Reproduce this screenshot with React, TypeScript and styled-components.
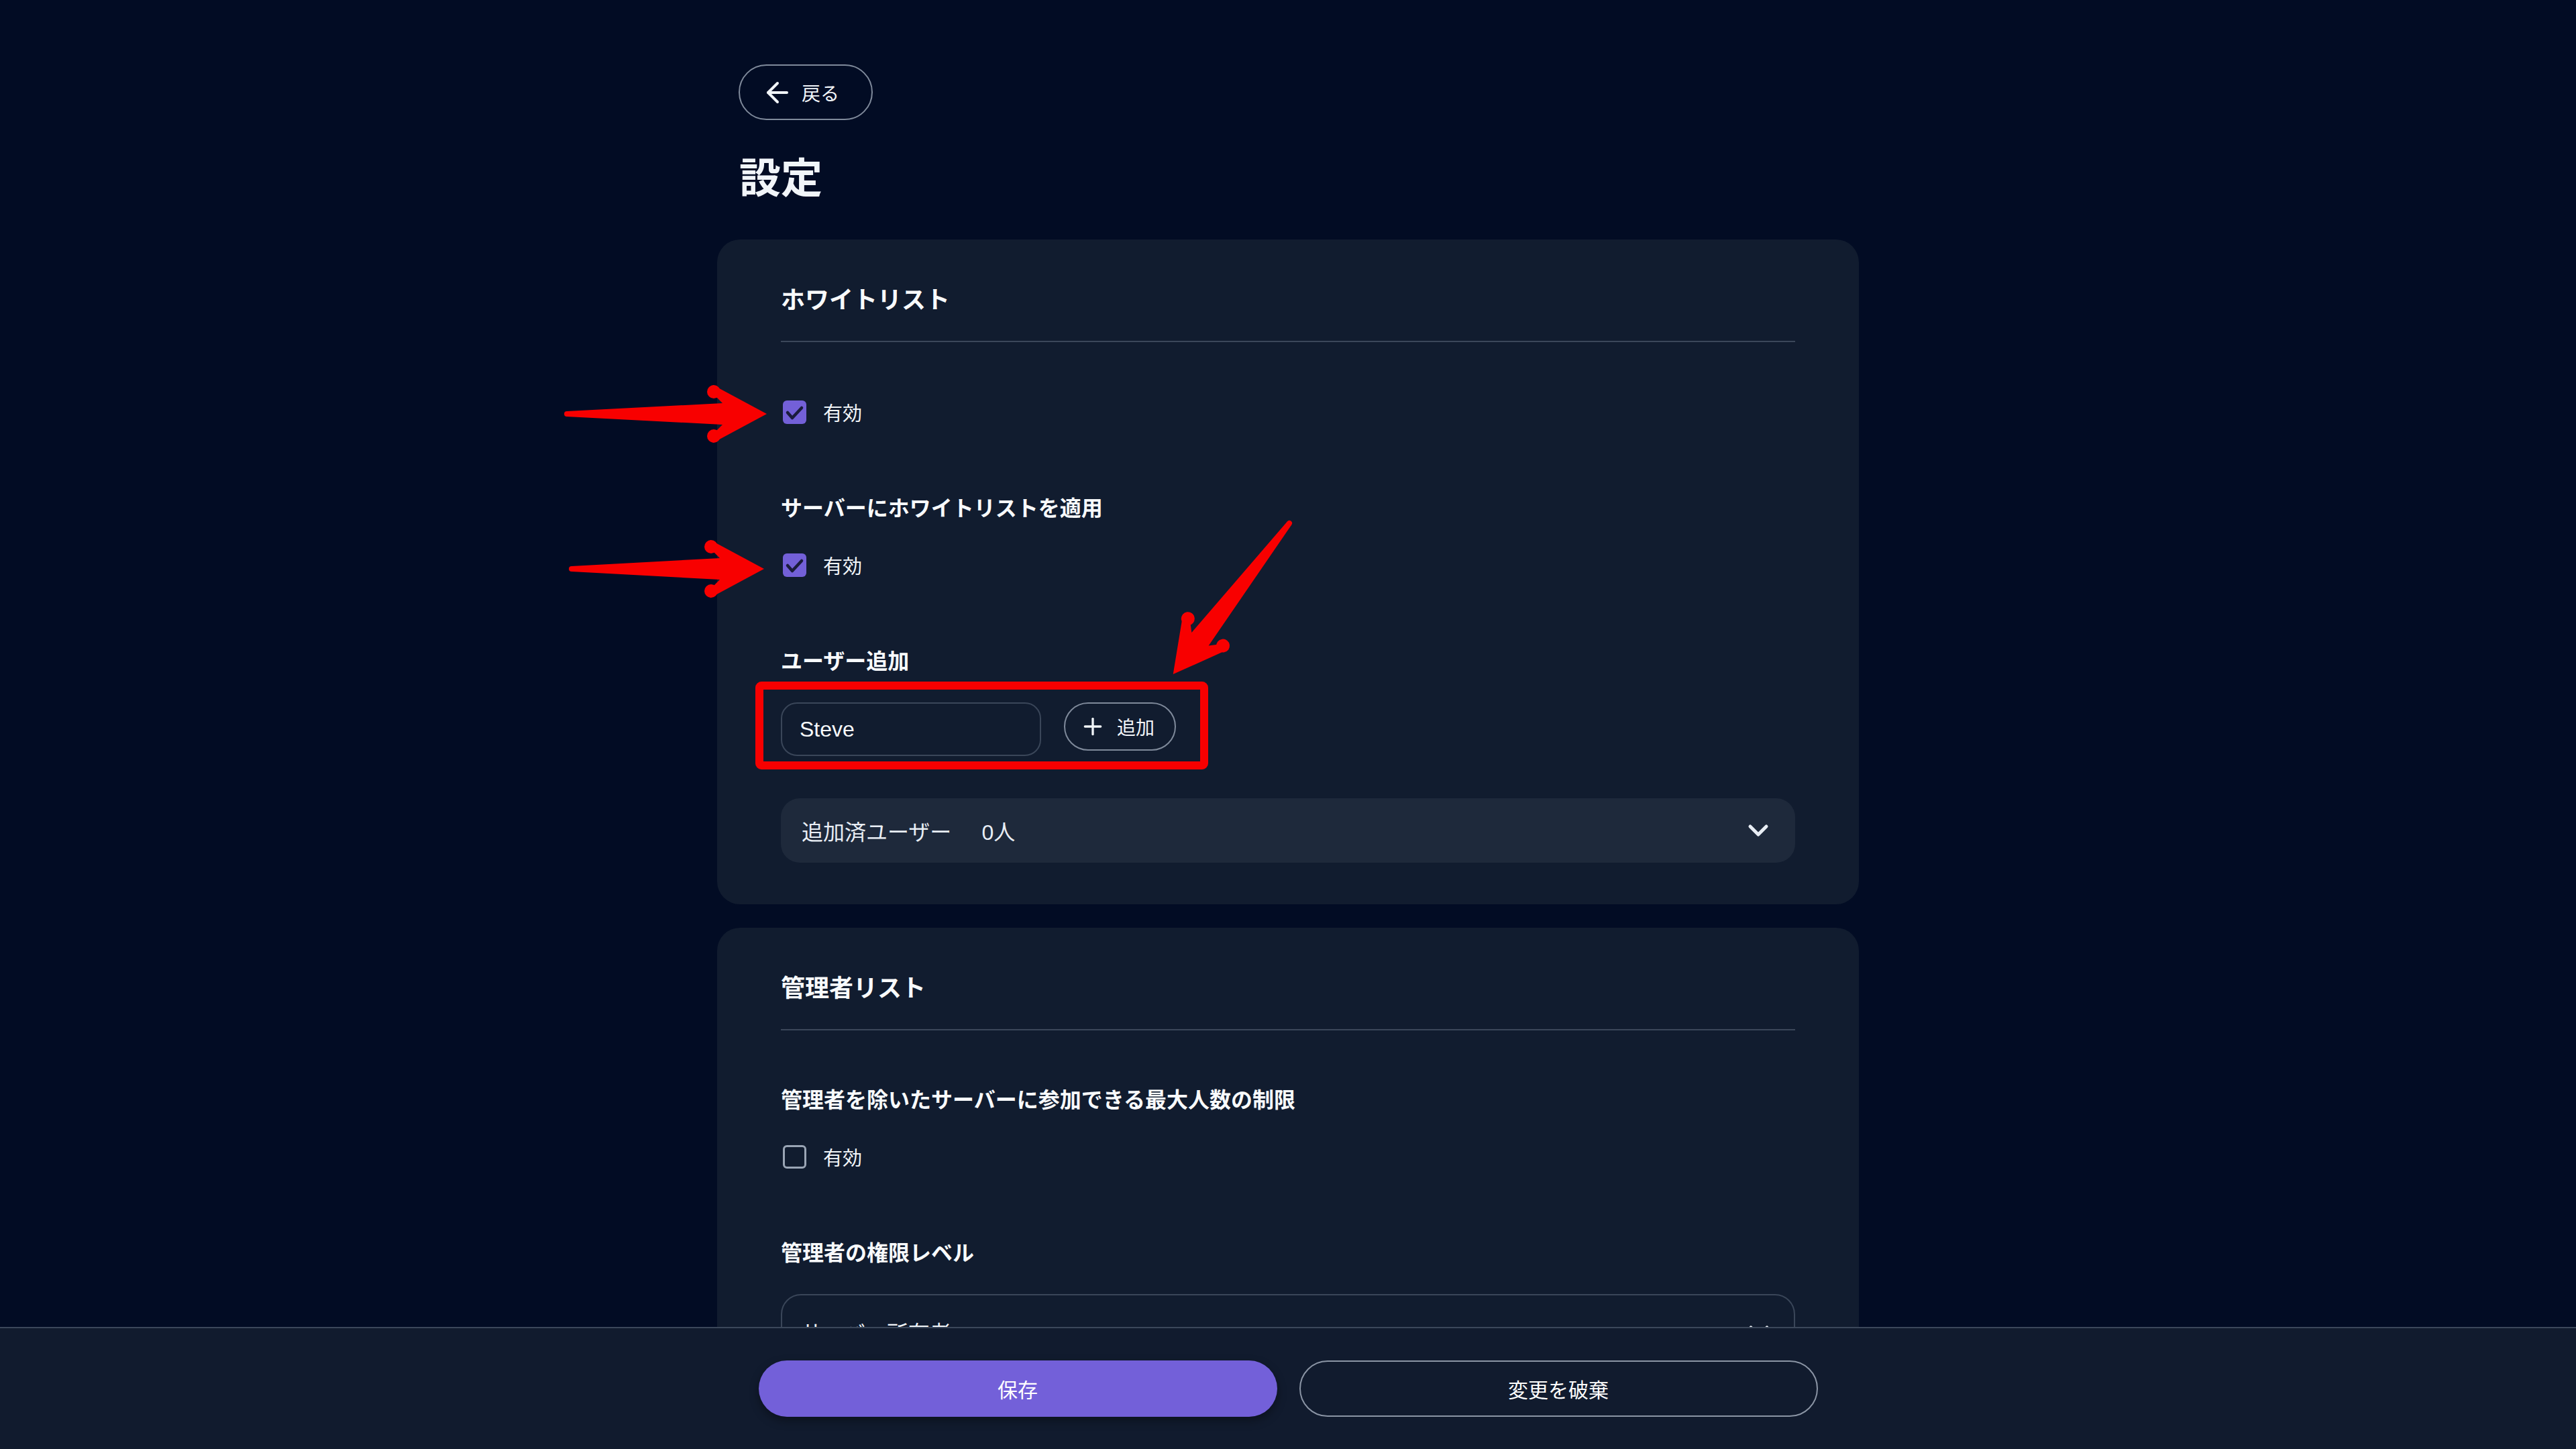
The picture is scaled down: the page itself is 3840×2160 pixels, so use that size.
import styled, { createGlobalStyle } from 'styled-components';
import { ArrowLeft, Plus, ChevronDown } from 'lucide-react';

const sans = `"Liberation Sans", "Noto Sans CJK JP", sans-serif`;

const GlobalStyle = createGlobalStyle`
  html, body {
    margin: 0;
    padding: 0;
    overflow: hidden;
  }

  body {
    background: #020c24;
    color: #f1f5f9;
    font-family: ${sans};
  }

  button, input {
    font-family: ${sans};
  }
`;

const Root = styled.div`
  position: relative;
  min-height: 2160px;
`;

const Page = styled.main`
  width: 1702px;
  margin: 0 auto;
  padding: 96px 0 260px;
  box-sizing: border-box;
  display: flex;
  flex-direction: column;
`;

const BackButton = styled.button`
  align-self: flex-start;
  margin-left: 32px;
  height: 83px;
  box-sizing: border-box;
  display: inline-flex;
  align-items: center;
  gap: 12px;
  padding: 0 48px 0 32px;
  border: 2px solid #7f8a9b;
  border-radius: 999px;
  background: transparent;
  color: #f1f5f9;
  font-size: 28px;
  cursor: pointer;
`;

const Title = styled.h1`
  margin: 52px 0 0 33px;
  font-size: 62px;
  line-height: 72px;
  font-weight: 700;
  color: #f1f5f9;
`;

const Cards = styled.div`
  margin-top: 54px;
  display: flex;
  flex-direction: column;
  gap: 35px;
`;

const Card = styled.section`
  background: #111c2f;
  border-radius: 34px;
  padding: 64px 95px 62px;
`;

const CardTitle = styled.h2`
  margin: 0;
  padding-bottom: 33px;
  border-bottom: 2px solid #3b475a;
  font-size: 36px;
  line-height: 54px;
  font-weight: 700;
  color: #f8fafc;
`;

const CardBody = styled.div`
  padding-top: 81px;
  display: flex;
  flex-direction: column;
  gap: 98px;
`;

const Field = styled.div`
  display: flex;
  flex-direction: column;
`;

const FieldLabel = styled.div`
  margin-bottom: 38px;
  font-size: 32px;
  line-height: 46px;
  font-weight: 700;
  color: #f8fafc;
`;

const CheckRow = styled.label`
  display: flex;
  align-items: center;
  gap: 25px;
  height: 46px;
  font-size: 29px;
  color: #f1f5f9;
`;

const Checkbox = styled.span<{ $checked?: boolean }>`
  margin-left: 3px;
  width: 35px;
  height: 35px;
  box-sizing: border-box;
  display: inline-flex;
  align-items: center;
  justify-content: center;
  border-radius: 6px;
  background: ${p => (p.$checked ? '#7360d8' : 'transparent')};
  border: ${p => (p.$checked ? 'none' : '3px solid #9aa5b5')};
`;

const AddRow = styled.div`
  display: flex;
  align-items: flex-start;
  gap: 34px;
`;

const NameInput = styled.input`
  width: 388px;
  height: 80px;
  box-sizing: border-box;
  padding: 0 26px;
  border: 2px solid #3a4659;
  border-radius: 24px;
  background: transparent;
  color: #f8fafc;
  font-size: 32px;
  outline: none;
`;

const AddButton = styled.button`
  height: 72px;
  box-sizing: border-box;
  display: inline-flex;
  align-items: center;
  gap: 16px;
  padding: 0 30px 0 21px;
  border: 2px solid #7f8a9b;
  border-radius: 999px;
  background: transparent;
  color: #f1f5f9;
  font-size: 28px;
  cursor: pointer;
`;

const Collapsible = styled.div`
  margin-top: 63px;
  height: 96px;
  display: flex;
  align-items: center;
  padding: 0 31px;
  border-radius: 28px;
  background: #1e293b;
  font-size: 32px;
  color: #e8edf4;

  svg {
    margin-left: auto;
  }
`;

const Count = styled.span`
  margin-left: 45px;
`;

const Select = styled.div`
  height: 112px;
  box-sizing: border-box;
  display: flex;
  align-items: center;
  padding: 0 28px;
  border: 2px solid #3a4659;
  border-radius: 30px;
  font-size: 32px;
  color: #f1f5f9;

  svg {
    margin-left: auto;
  }
`;

const Footer = styled.footer`
  position: fixed;
  left: 0;
  right: 0;
  bottom: 0;
  height: 182px;
  box-sizing: border-box;
  padding-top: 48px;
  border-top: 2px solid #3b475a;
  background: #111b2e;
  display: flex;
  justify-content: center;
  gap: 33px;
  z-index: 10;
`;

const FooterButton = styled.button<{ $primary?: boolean }>`
  width: 773px;
  height: 84px;
  box-sizing: border-box;
  border-radius: 999px;
  border: ${p => (p.$primary ? 'none' : '2px solid #8b95a5')};
  background: ${p => (p.$primary ? '#7360d9' : 'transparent')};
  box-shadow: ${p => (p.$primary ? '0 6px 14px rgba(0, 0, 0, 0.35)' : 'none')};
  color: #ffffff;
  font-size: 30px;
  cursor: pointer;
`;

const Annotations = styled.svg`
  position: absolute;
  left: 0;
  top: 0;
  width: 3840px;
  height: 2160px;
  pointer-events: none;
  z-index: 5;
`;

const CheckMark = () => (
  <svg width="35" height="35" viewBox="0 0 35 35">
    <polyline
      points="7,18 14,26 28,11"
      fill="none"
      stroke="#1b1c3c"
      strokeWidth="4.5"
      strokeLinecap="round"
      strokeLinejoin="round"
    />
  </svg>
);

interface CheckProps {
  checked?: boolean;
  label: string;
}

const Check = ({ checked, label }: CheckProps) => (
  <CheckRow>
    <Checkbox $checked={checked}>{checked && <CheckMark />}</Checkbox>
    {label}
  </CheckRow>
);

interface ArrowProps {
  x: number;
  y: number;
  angle: number;
  length: number;
}

// hand-drawn style red pointer, tail at (x, y), pointing along angle
const RedArrow = ({ x, y, angle, length: L }: ArrowProps) => {
  const pts = [
    [0, -4], [L - 66, -16], [L - 74, -24], [L - 87, -36], [L - 80, -43], [L, 0],
    [L - 80, 43], [L - 87, 36], [L - 74, 24], [L - 66, 16], [0, 4],
  ].map(p => p.join(',')).join(' ');
  return (
    <g transform={`translate(${x} ${y}) rotate(${angle})`} fill="#f80000">
      <polygon points={pts} />
      <circle cx={L - 79} cy={-33} r={10} />
      <circle cx={L - 79} cy={33} r={10} />
      <circle cx={0} cy={0} r={4} />
    </g>
  );
};

const App = () => {
  return (
    <Root>
      <GlobalStyle />
      <Page>
        <BackButton>
          <ArrowLeft size={48} strokeWidth={2} />
          戻る
        </BackButton>
        <Title>設定</Title>

        <Cards>
          <Card>
            <CardTitle>ホワイトリスト</CardTitle>
            <CardBody>
              <Check checked label="有効" />
              <Field>
                <FieldLabel>サーバーにホワイトリストを適用</FieldLabel>
                <Check checked label="有効" />
              </Field>
              <Field>
                <FieldLabel>ユーザー追加</FieldLabel>
                <AddRow>
                  <NameInput defaultValue="Steve" />
                  <AddButton>
                    <Plus size={40} strokeWidth={2} />
                    追加
                  </AddButton>
                </AddRow>
                <Collapsible>
                  追加済ユーザー
                  <Count>0人</Count>
                  <ChevronDown size={48} strokeWidth={2.5} />
                </Collapsible>
              </Field>
            </CardBody>
          </Card>

          <Card>
            <CardTitle>管理者リスト</CardTitle>
            <CardBody>
              <Field>
                <FieldLabel>管理者を除いたサーバーに参加できる最大人数の制限</FieldLabel>
                <Check label="有効" />
              </Field>
              <Field>
                <FieldLabel>管理者の権限レベル</FieldLabel>
                <Select>
                  サーバー所有者
                  <ChevronDown size={48} strokeWidth={2.5} />
                </Select>
              </Field>
            </CardBody>
          </Card>
        </Cards>
      </Page>

      <Annotations viewBox="0 0 3840 2160">
        <RedArrow x={845} y={617} angle={0} length={298} />
        <RedArrow x={852} y={848} angle={0} length={287} />
        <RedArrow x={1922} y={780} angle={127.6} length={284} />
        <rect x={1132} y={1022} width={663} height={119} rx={3} fill="none" stroke="#f80000" strokeWidth={12} />
      </Annotations>

      <Footer>
        <FooterButton $primary>保存</FooterButton>
        <FooterButton>変更を破棄</FooterButton>
      </Footer>
    </Root>
  );
};

export default App;
